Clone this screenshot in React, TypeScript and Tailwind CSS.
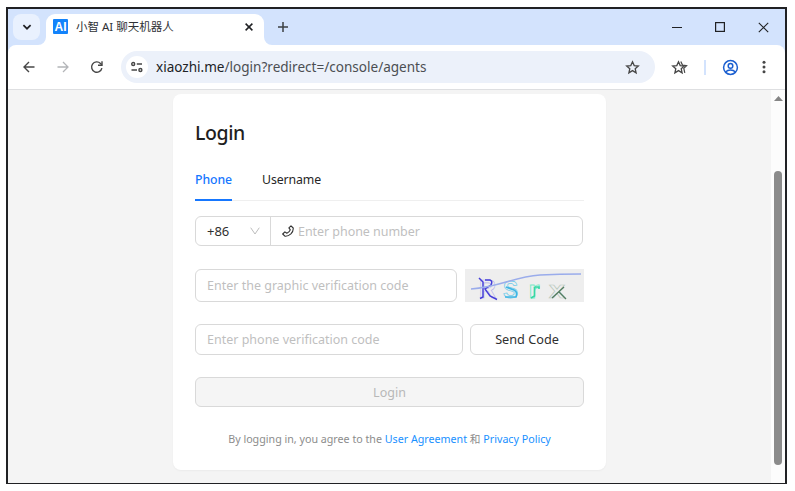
import React from "react";

const UI = "font-['Noto_Sans','Noto_Sans_CJK_SC',sans-serif]";

function Flare({ className }: { className: string }) {
  return (
    <svg className={className} width="8" height="8" viewBox="0 0 8 8">
      <path d="M8 0V8H0A8 8 0 0 0 8 0Z" fill="#fff" />
    </svg>
  );
}

function TabStrip() {
  return (
    <div className="flex h-[36px] shrink-0 bg-[#d3e3fd] pl-[5px]">
      <div className="mt-[5px] flex h-[26px] w-[27px] items-center justify-center rounded-[8px] bg-[#e9f1fe]">
        <svg width="10" height="8" viewBox="0 0 10 8" fill="none" stroke="#202124" strokeWidth="1.7">
          <path d="M1.4 2.2L5 5.7L8.6 2.2" />
        </svg>
      </div>
      <div className="relative ml-[6px] mt-[5px] flex h-[31px] w-[218px] rounded-t-[9px] bg-white">
        <Flare className="absolute bottom-0 -left-[8px]" />
        <Flare className="absolute bottom-0 -right-[8px] -scale-x-100" />
        <div className="ml-[7px] mt-[5px] flex h-[15px] w-[15px] items-center justify-center rounded-[1px] bg-[#1283fb] font-['Liberation_Sans',sans-serif] text-[12px] font-bold leading-none text-white">
          AI
        </div>
        <div className={`ml-[8px] mt-[3px] w-[110px] whitespace-nowrap text-[11.5px] leading-[20px] text-[#303236] ${UI}`}>
          小智 AI 聊天机器人
        </div>
        <svg className="ml-[58px] mt-[8px]" width="10" height="10" viewBox="0 0 10 10" stroke="#202124" strokeWidth="1.5">
          <path d="M1.6 1.6L8.4 8.4M8.4 1.6L1.6 8.4" />
        </svg>
      </div>
      <svg className="ml-[14px] mt-[13px]" width="10" height="10" viewBox="0 0 10 10" stroke="#3c4043" strokeWidth="1.5">
        <path d="M5 0V10M0 5H10" />
      </svg>
      <div className="ml-auto mr-[16px] mt-[13px] flex h-[10px] items-center gap-[33px]">
        <svg width="10" height="10" viewBox="0 0 10 10" stroke="#202124" strokeWidth="1">
          <path d="M0 5.5H10" />
        </svg>
        <svg width="10" height="10" viewBox="0 0 10 10" fill="none" stroke="#202124" strokeWidth="1.2">
          <rect x=".6" y=".6" width="8.8" height="8.8" />
        </svg>
        <svg width="11" height="11" viewBox="0 0 11 11" stroke="#202124" strokeWidth="1.1">
          <path d="M.8 .8L10.2 10.2M10.2 .8L.8 10.2" />
        </svg>
      </div>
    </div>
  );
}

const STAR = "M7.5 1.8L9.2 5.6L13.3 6L10.2 8.7L11.1 12.8L7.5 10.6L3.9 12.8L4.8 8.7L1.7 6L5.8 5.6Z";

function Toolbar() {
  return (
    <div className="h-[45px] shrink-0 bg-[#d3e3fd]">
      <div className="flex h-[45px] items-center rounded-t-[8px] border-b border-[#dedfe1] bg-white pl-[14px]">
        <svg width="14" height="14" viewBox="0 0 14 14" fill="none" stroke="#474747" strokeWidth="1.4">
          <path d="M12.5 7H2M7 2L2 7L7 12" />
        </svg>
        <svg className="ml-[20px]" width="14" height="14" viewBox="0 0 14 14" fill="none" stroke="#b3b5b8" strokeWidth="1.3">
          <path d="M1.5 7H12M7 2L12 7L7 12" />
        </svg>
        <svg className="ml-[20px]" width="14" height="14" viewBox="0 0 14 14" fill="none" stroke="#474747" strokeWidth="1.4">
          <path d="M11.9 8.2A5.2 5.2 0 1 1 10.5 3.4L11.8 4.7" />
          <path d="M12 1.2V5.2H8" />
        </svg>
        <div className="ml-[17px] flex h-[32px] w-[534px] items-center rounded-full bg-[#ecf1fa] pl-[5px]">
          <div className="flex h-[22px] w-[22px] items-center justify-center rounded-full bg-white">
            <svg width="14" height="12" viewBox="0 0 14 12" fill="none" stroke="#474747" strokeWidth="1.4">
              <circle cx="3.2" cy="3" r="1.5" />
              <path d="M6.8 3H12M1.5 9H7" />
              <circle cx="10.4" cy="9" r="1.5" />
            </svg>
          </div>
          <div className={`ml-[8px] whitespace-nowrap text-[13.55px] leading-[20px] text-[#4b4e52] ${UI}`}>
            <span className="text-[#202226]">xiaozhi.me</span>/login?redirect=/console/agents
          </div>
          <svg className="ml-auto mr-[15px]" width="15" height="15" viewBox="0 0 15 15" fill="none" stroke="#474747" strokeWidth="1.3">
            <path d={STAR} />
          </svg>
        </div>
        <svg className="ml-[16px]" width="18" height="15" viewBox="0 0 18 15" fill="none" stroke="#474747" strokeWidth="1.3">
          <path d={STAR} />
          <path d="M9.8 1.4L11.5 5.1L15.6 5.7L12.8 8.4L13.8 12.8" strokeWidth="1.2" />
        </svg>
        <div className="ml-[15px] h-[15px] w-[2px] bg-[#d3e3fd]" />
        <svg className="ml-[16px]" width="17" height="17" viewBox="0 0 17 17" fill="none" stroke="#1b5fd0" strokeWidth="1.5">
          <circle cx="8.5" cy="8.5" r="6.9" />
          <circle cx="8.5" cy="6.9" r="2.3" />
          <path d="M3.6 13C6 10.4 11 10.4 13.4 13" />
        </svg>
        <svg className="ml-[22px]" width="6" height="14" viewBox="0 0 6 14" fill="#474747">
          <circle cx="3" cy="2.2" r="1.5" />
          <circle cx="3" cy="7" r="1.5" />
          <circle cx="3" cy="11.8" r="1.5" />
        </svg>
      </div>
    </div>
  );
}

function Captcha() {
  return (
    <svg className="ml-auto overflow-visible bg-[#eeeeee]" width="119" height="33" viewBox="0 0 119 33">
      <g fill="none" fontFamily="Liberation Sans, sans-serif" fontWeight="bold">
        <text x="14" y="29" fontSize="26" textLength="17" lengthAdjust="spacingAndGlyphs" stroke="#b3b0ea" strokeWidth=".6">R</text>
        <text x="38" y="28.500" fontSize="24" textLength="15" lengthAdjust="spacingAndGlyphs" stroke="#74cdea" strokeWidth=".8">S</text>
        <text x="63.500" y="29" fontSize="24" textLength="11" lengthAdjust="spacingAndGlyphs" stroke="#7ce9c8" strokeWidth=".8">r</text>
        <text x="84" y="29" fontSize="24" textLength="16" lengthAdjust="spacingAndGlyphs" stroke="#bccabf" strokeWidth=".7">x</text>
      </g>
      <g fill="none">
        <path d="M14 9L18 13V28L15 29.500M20 11H25Q28 12 26 16L20 20L25 27L32 30.500" stroke="#463fd9" strokeWidth="1.5" />
        <path d="M41 18L49 21Q53 23 51 28H40" stroke="#3eb5e5" strokeWidth="1.7" />
        <path d="M69.500 18V27L66 29M70 18H74V20" stroke="#36d8a5" strokeWidth="1.6" />
        <path d="M87 29L99 18M94 23L101 30" stroke="#537d62" strokeWidth="1.4" />
        <path d="M6 20C35 18 48 8 75 6Q94 5 116 5" stroke="#9aaceb" strokeWidth="1.5" />
      </g>
    </svg>
  );
}

const BOX = "flex items-center rounded-[6px] border border-[#d9d9d9] whitespace-nowrap";

function LoginCard() {
  return (
    <div className="ml-[165px] mt-[4px] flex h-[376px] w-[433px] flex-col rounded-[8px] bg-white px-[22px] text-[12.5px] shadow-[0_1px_2px_rgba(0,0,0,0.04)]">
      <h1 className="mt-[25px] h-[28px] text-[19.5px] font-medium leading-[28px] tracking-[-0.4px] text-[#1f1f1f]">Login</h1>
      <div className="mt-[22px] flex h-[32px] shrink-0 border-b border-[#efefef] text-[12.3px] leading-[22px] tracking-[-0.1px] text-[#262626]">
        <div className="h-[32px] w-[37px] whitespace-nowrap border-b-2 border-[#1677ff] font-medium text-[#1677ff]">Phone</div>
        <div className="ml-[30px]">Username</div>
      </div>
      <div className={`${BOX} mt-[15px] h-[30px] w-[388px] shrink-0`}>
        <div className="flex h-full w-[75px] items-center border-r border-[#d9d9d9] pl-[11px] text-[13px] text-[#303030]">
          <span className="pt-[2px]">+86</span>
          <svg className="ml-auto mr-[10px]" width="10" height="8" viewBox="0 0 10 8" fill="none" stroke="#bcbcbc">
            <path d="M.7 .7L5 7L9.3 .7" />
          </svg>
        </div>
        <svg className="ml-[11px]" width="12" height="12" viewBox="0 0 12 12" fill="none" stroke="#303030" strokeWidth="1.1" strokeLinejoin="round">
          <path d="M9 .8L11.200 3Q11.500 6.200 8.900 8.900Q6.100 11.500 2.900 11.200L.7 9L2.900 6.900L4.900 8.300Q7.300 7.300 8.300 4.900L6.900 2.900Z" />
        </svg>
        <span className="ml-[4px] pt-[2px] tracking-[-0.05px] text-[#bfbfbf]">Enter phone number</span>
      </div>
      <div className="mt-[23px] flex h-[33px] w-[389px] shrink-0">
        <div className={`${BOX} h-[33px] w-[262px] pl-[11px] pt-[2px] text-[#bfbfbf]`}>Enter the graphic verification code</div>
        <Captcha />
      </div>
      <div className="mt-[22px] flex h-[31px] w-[389px] shrink-0 justify-between">
        <div className={`${BOX} w-[268px] pl-[11px] pt-[2px] text-[#bfbfbf]`}>Enter phone verification code</div>
        <div className={`${BOX} w-[114px] justify-center pt-px text-[12.7px] text-[#303030]`}>Send Code</div>
      </div>
      <div className={`${BOX} mt-[22px] h-[30px] w-[389px] shrink-0 justify-center bg-[#f5f5f5] pt-[2px] text-[#b8b8b8]`}>Login</div>
      <div className="mt-[23px] whitespace-nowrap text-center text-[10.7px] leading-[18px] text-[#8c8c8c]">
        By logging in, you agree to the <span className="text-[#1890ff]">User Agreement</span> 和 <span className="text-[#1890ff]">Privacy Policy</span>
      </div>
    </div>
  );
}

export default function App() {
  return (
    <div className={`h-[491px] w-[795px] overflow-hidden bg-white pl-[6px] pt-[7px] ${UI}`}>
      <div className="flex h-[477px] w-[781px] flex-col border-2 border-b-[1px] border-[#202124]">
        <TabStrip />
        <Toolbar />
        <div className="flex min-h-0 flex-1 bg-[#f4f4f4]">
          <LoginCard />
          <div className="ml-auto flex w-[14px] flex-col items-center bg-[#fcfcfc]">
            <svg className="mt-[6px] shrink-0" width="9" height="5" viewBox="0 0 9 5">
              <path d="M4.5 0L9 5H0Z" fill="#858585" />
            </svg>
            <div className="mt-[70px] h-[294px] w-[8px] shrink-0 rounded-full bg-[#8b8b8b]" />
          </div>
        </div>
      </div>
    </div>
  );
}
